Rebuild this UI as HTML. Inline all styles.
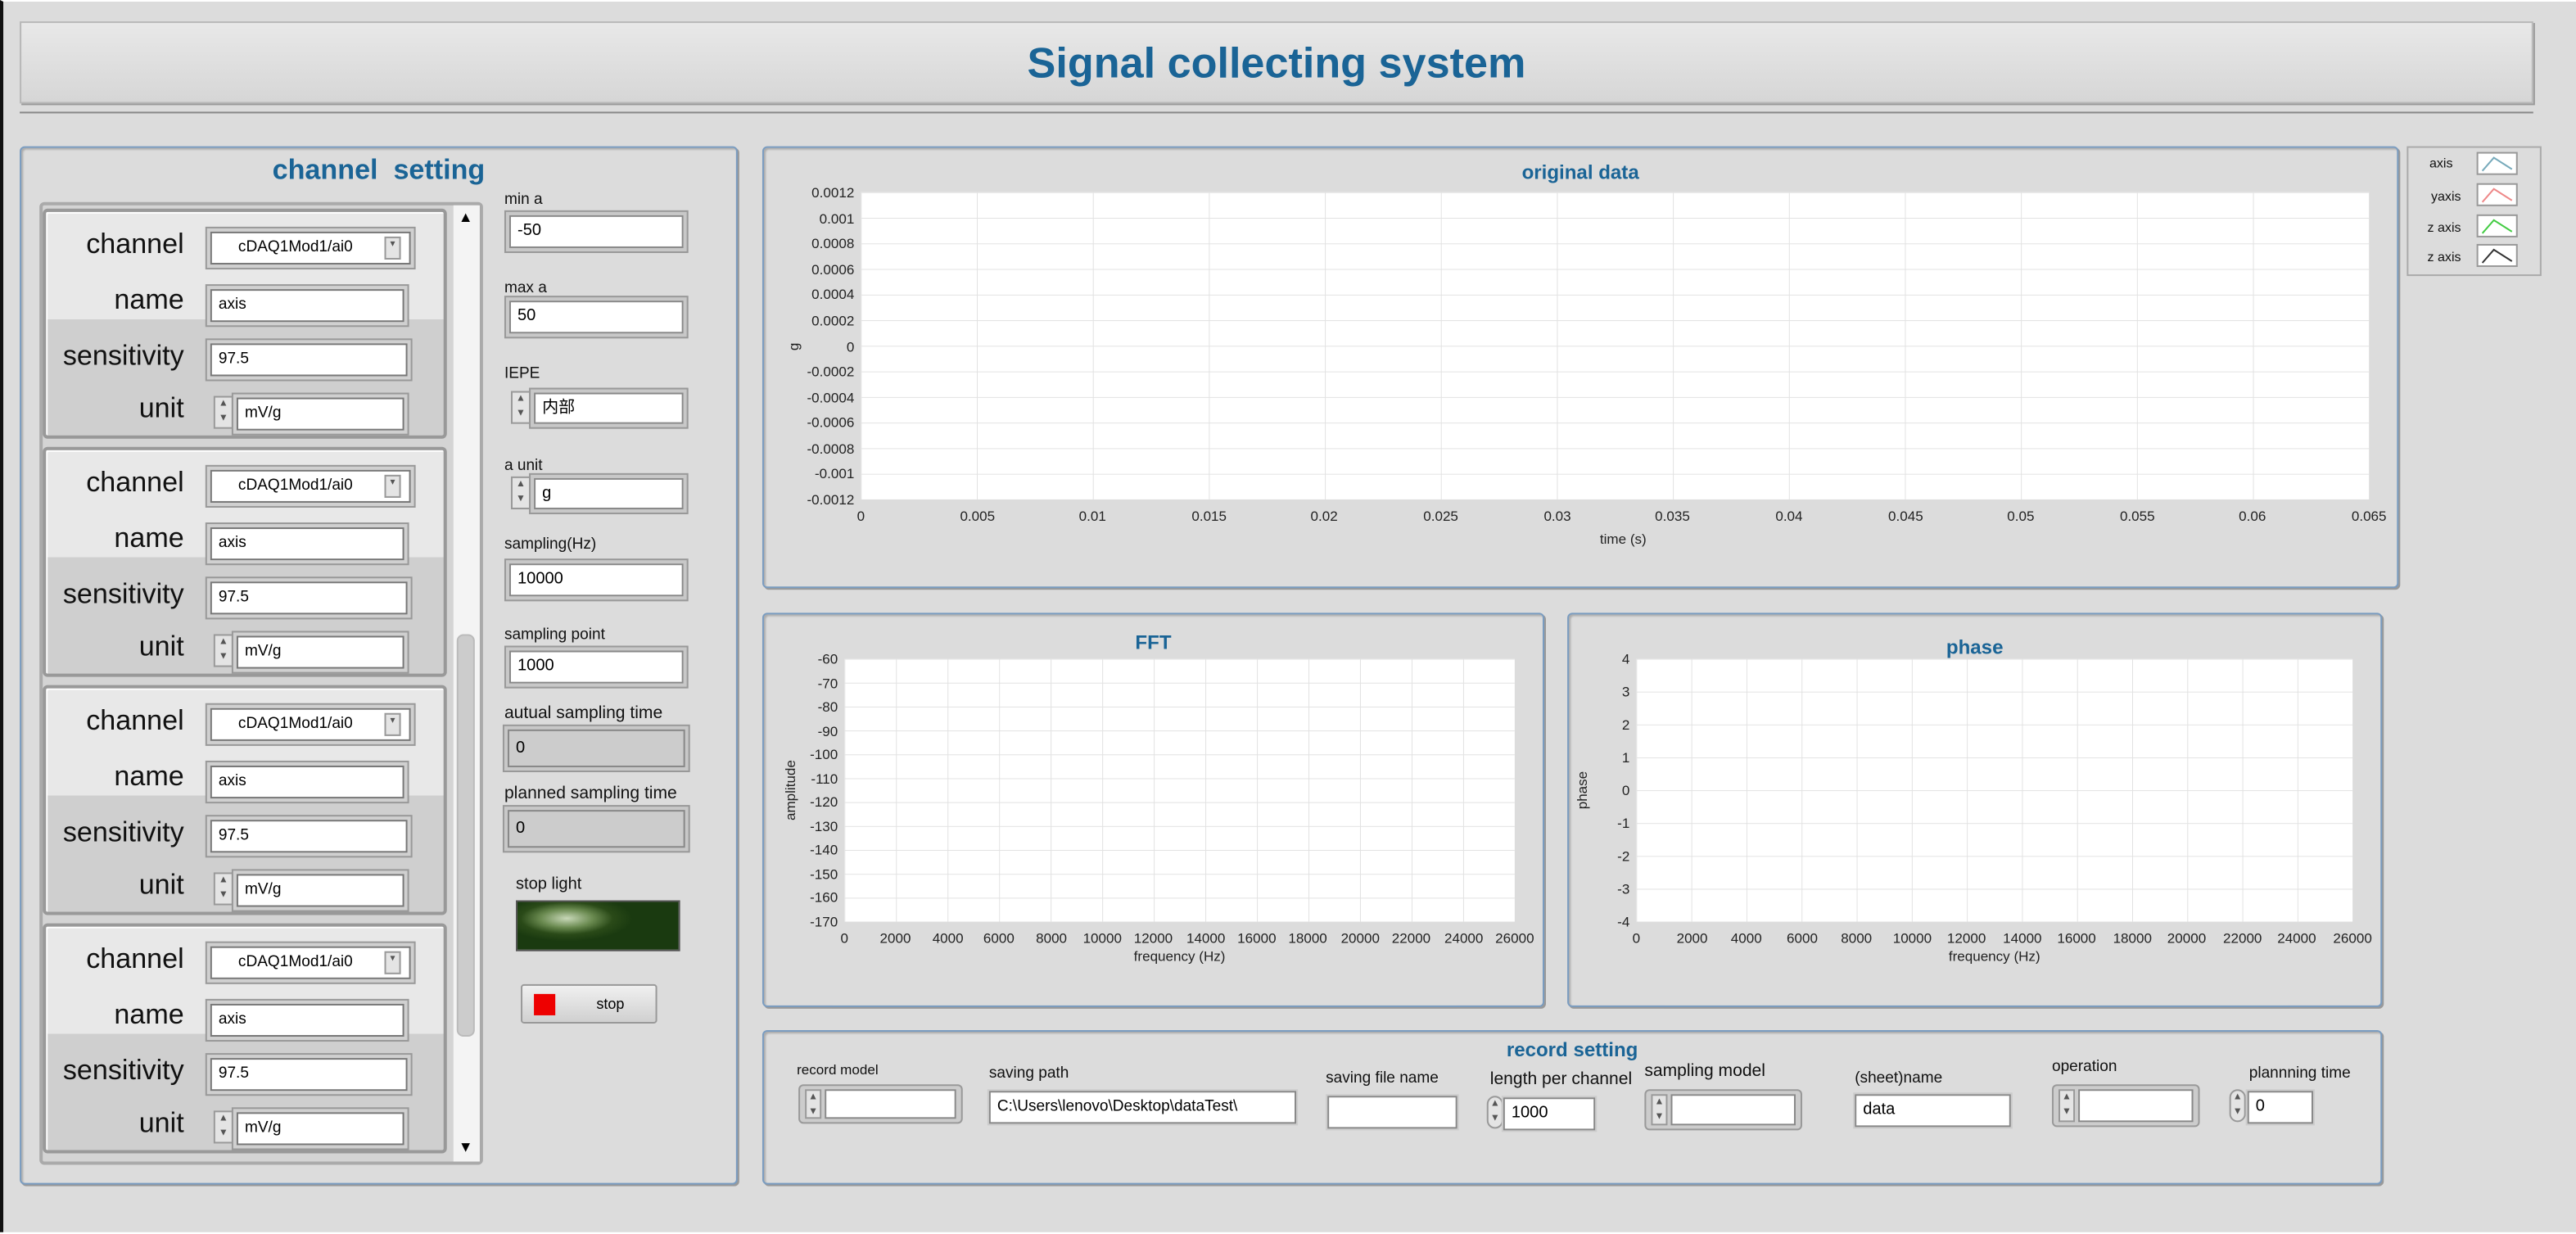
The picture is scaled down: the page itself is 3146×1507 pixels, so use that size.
<!DOCTYPE html>
<html><head><meta charset="utf-8"><style>
*{box-sizing:border-box;margin:0;padding:0}
html,body{width:3146px;height:1505px;overflow:hidden;background:#fff}
#s{position:absolute;left:0;top:0;width:1568px;height:750px;transform:scale(2.00638);transform-origin:0 0;font-family:"Liberation Sans","Noto Sans CJK SC",sans-serif;background:#dcdcdc;border-left:2px solid #111;border-top:1px solid #fff}
.a{position:absolute}
.hdr{left:10px;top:12px;width:1530px;height:50px;background:linear-gradient(#e8e8e8,#d6d6d6);border:1px solid #b8b8b8;box-shadow:1px 1px 0 #999;text-align:center;font-weight:bold;color:#1a6496;font-size:26px;line-height:48px}
.pan{border:1px solid #7a9cc0;border-radius:3px;box-shadow:1px 1px 1px #aaa inset,1px 1px 0 #999;background:#dcdcdc}
.pt{color:#1a6496;font-weight:bold;text-align:center;position:absolute;width:100%}
.box{position:absolute;background:#fff;border:1px solid #888;box-shadow:0 0 0 2px #c8c8c8,0 0 0 3px #999;font-size:10px;line-height:18px;padding-left:4px;color:#000}
.lb{position:absolute;font-size:9.5px;color:#111}
.cl{position:absolute;left:24px;width:246px;height:140px;border:2px solid #999;border-radius:3px;background:linear-gradient(#e8e8e8 0,#e8e8e8 48%,#cfcfcf 48%);box-shadow:inset 1px 1px 0 #fff}
.cl .l{position:absolute;right:158px;font-size:17px;color:#111;text-align:right}
.cl .b{position:absolute;left:100px;height:20px;background:#fff;border:1px solid #777;box-shadow:0 0 0 2px #d0d0d0,0 0 0 3px #999;font-size:9.5px;line-height:18px;padding-left:4px}
.sp{position:absolute;width:12px;height:20px;border:1px solid #999;background:#e4e4e4;font-size:6px;line-height:9px;text-align:center;color:#555}
svg text{font-family:"Liberation Sans",sans-serif}
</style></head><body><div id="s">
<div class="a hdr">Signal collecting system</div>
<div class="a" style="left:10px;top:67px;width:1530px;height:1px;background:#888"></div>

<!-- channel setting -->
<div class="a pan" style="left:10px;top:88px;width:437px;height:632px">
<div class="pt" style="top:4px;font-size:17px">channel&nbsp; setting</div>
</div>
<div class="a" style="left:22px;top:122px;width:270px;height:586px;border:2px solid #aaa;border-radius:3px;background:#d4d4d4"></div>
<div class="a" style="left:274px;top:124px;width:16px;height:582px;background:#f4f4f4"></div>
<div class="a" style="left:276px;top:385px;width:11px;height:245px;background:#ccc;border-radius:4px;border:1px solid #bbb"></div>
<div class="a" style="left:277px;top:126px;font-size:9px">▲</div>
<div class="a" style="left:277px;top:692px;font-size:9px">▼</div>

<div class="cl" style="top:126px">
<div class="l" style="top:10px">channel</div><div class="b" style="top:12px;width:122px;padding-left:16px">cDAQ1Mod1/ai0</div><div class="sp" style="left:206px;top:15px;height:14px;width:10px">▾</div>
<div class="l" style="top:44px">name</div><div class="b" style="top:47px;width:118px">axis</div>
<div class="l" style="top:78px">sensitivity</div><div class="b" style="top:80px;width:120px">97.5</div>
<div class="l" style="top:110px">unit</div><div class="sp" style="left:102px;top:112px">▲<br>▼</div><div class="b" style="left:116px;top:113px;width:102px">mV/g</div>
</div>
<div class="cl" style="top:271px">
<div class="l" style="top:10px">channel</div><div class="b" style="top:12px;width:122px;padding-left:16px">cDAQ1Mod1/ai0</div><div class="sp" style="left:206px;top:15px;height:14px;width:10px">▾</div>
<div class="l" style="top:44px">name</div><div class="b" style="top:47px;width:118px">axis</div>
<div class="l" style="top:78px">sensitivity</div><div class="b" style="top:80px;width:120px">97.5</div>
<div class="l" style="top:110px">unit</div><div class="sp" style="left:102px;top:112px">▲<br>▼</div><div class="b" style="left:116px;top:113px;width:102px">mV/g</div>
</div>
<div class="cl" style="top:416px">
<div class="l" style="top:10px">channel</div><div class="b" style="top:12px;width:122px;padding-left:16px">cDAQ1Mod1/ai0</div><div class="sp" style="left:206px;top:15px;height:14px;width:10px">▾</div>
<div class="l" style="top:44px">name</div><div class="b" style="top:47px;width:118px">axis</div>
<div class="l" style="top:78px">sensitivity</div><div class="b" style="top:80px;width:120px">97.5</div>
<div class="l" style="top:110px">unit</div><div class="sp" style="left:102px;top:112px">▲<br>▼</div><div class="b" style="left:116px;top:113px;width:102px">mV/g</div>
</div>
<div class="cl" style="top:561px">
<div class="l" style="top:10px">channel</div><div class="b" style="top:12px;width:122px;padding-left:16px">cDAQ1Mod1/ai0</div><div class="sp" style="left:206px;top:15px;height:14px;width:10px">▾</div>
<div class="l" style="top:44px">name</div><div class="b" style="top:47px;width:118px">axis</div>
<div class="l" style="top:78px">sensitivity</div><div class="b" style="top:80px;width:120px">97.5</div>
<div class="l" style="top:110px">unit</div><div class="sp" style="left:102px;top:112px">▲<br>▼</div><div class="b" style="left:116px;top:113px;width:102px">mV/g</div>
</div>

<!-- right column -->
<div class="lb" style="left:305px;top:115px">min a</div><div class="box" style="left:308px;top:130px;width:106px;height:20px">-50</div>
<div class="lb" style="left:305px;top:169px">max a</div><div class="box" style="left:308px;top:182px;width:106px;height:20px">50</div>
<div class="lb" style="left:305px;top:221px">IEPE</div><div class="sp" style="left:309px;top:237px">▲<br>▼</div><div class="box" style="left:323px;top:238px;width:91px;height:19px">内部</div>
<div class="lb" style="left:305px;top:277px">a unit</div><div class="sp" style="left:309px;top:289px">▲<br>▼</div><div class="box" style="left:323px;top:290px;width:91px;height:19px">g</div>
<div class="lb" style="left:305px;top:325px">sampling(Hz)</div><div class="box" style="left:308px;top:342px;width:106px;height:20px">10000</div>
<div class="lb" style="left:305px;top:380px">sampling point</div><div class="box" style="left:308px;top:395px;width:106px;height:20px">1000</div>
<div class="lb" style="left:305px;top:427px;font-size:10.5px">autual sampling time</div><div class="box" style="left:307px;top:443px;width:108px;height:23px;background:#ccc;line-height:22px">0</div>
<div class="lb" style="left:305px;top:476px;font-size:10.5px">planned sampling time</div><div class="box" style="left:307px;top:492px;width:108px;height:23px;background:#ccc;line-height:22px">0</div>
<div class="lb" style="left:312px;top:532px;font-size:10px">stop light</div>
<div class="a" style="left:312px;top:547px;width:100px;height:31px;border:1px solid #555;background:radial-gradient(ellipse 40px 14px at 30px 10px,#c8d8b8,#6a8a50 40%,#2a4a18 70%,#1a3a10)"></div>
<div class="a" style="left:315px;top:598px;width:83px;height:24px;border:1px solid #999;border-radius:2px;background:linear-gradient(#f0f0f0,#d0d0d0);font-size:9px;line-height:22px;padding-left:45px">stop</div>
<div class="a" style="left:323px;top:604px;width:13px;height:13px;background:#e00"></div>

<!-- plot panels -->
<div class="a pan" style="left:462px;top:88px;width:996px;height:269px"><div class="pt" style="top:8px;font-size:12px">original data</div></div>
<div class="a pan" style="left:462px;top:372px;width:476px;height:240px"><div class="pt" style="top:10px;font-size:12px">FFT</div></div>
<div class="a pan" style="left:952px;top:372px;width:496px;height:240px"><div class="pt" style="top:13px;font-size:12px">phase</div></div>
<div class="a pan" style="left:462px;top:626px;width:986px;height:94px"><div class="pt" style="top:4px;font-size:12px">record setting</div></div>

<div class="a" style="left:1463px;top:88px;width:82px;height:79px;border:1px solid #aaa;background:#dcdcdc"></div>

<svg class="a" style="left:0;top:0" width="1568" height="750" viewBox="0 0 1568 750">
<defs>
<pattern id="g1" x="522" y="116" width="70.615" height="15.583" patternUnits="userSpaceOnUse"><path d="M0 0V16M0 0H71" stroke="#e2e2e2" fill="none"/></pattern>
<pattern id="g2" x="512" y="400" width="31.385" height="14.545" patternUnits="userSpaceOnUse"><path d="M0 0V15M0 0H32" stroke="#e2e2e2" fill="none"/></pattern>
<pattern id="g3" x="994" y="400" width="33.54" height="20" patternUnits="userSpaceOnUse"><path d="M0 0V20M0 0H34" stroke="#e2e2e2" fill="none"/></pattern>
</defs>
<rect x="522" y="116" width="918" height="187" fill="#fff"/><rect x="522" y="116" width="918" height="187" fill="url(#g1)"/>
<rect x="512" y="400" width="408" height="160" fill="#fff"/><rect x="512" y="400" width="408" height="160" fill="url(#g2)"/>
<rect x="994" y="400" width="436" height="160" fill="#fff"/><rect x="994" y="400" width="436" height="160" fill="url(#g3)"/>
<g font-size="8.5" fill="#222" text-anchor="end">
<text x="518" y="119">0.0012</text><text x="518" y="135">0.001</text><text x="518" y="150">0.0008</text><text x="518" y="166">0.0006</text><text x="518" y="181">0.0004</text><text x="518" y="197">0.0002</text><text x="518" y="213">0</text><text x="518" y="228">-0.0002</text><text x="518" y="244">-0.0004</text><text x="518" y="259">-0.0006</text><text x="518" y="275">-0.0008</text><text x="518" y="290">-0.001</text><text x="518" y="306">-0.0012</text>
<text x="508" y="403">-60</text><text x="508" y="418">-70</text><text x="508" y="432">-80</text><text x="508" y="447">-90</text><text x="508" y="461">-100</text><text x="508" y="476">-110</text><text x="508" y="490">-120</text><text x="508" y="505">-130</text><text x="508" y="519">-140</text><text x="508" y="534">-150</text><text x="508" y="548">-160</text><text x="508" y="563">-170</text>
<text x="990" y="403">4</text><text x="990" y="423">3</text><text x="990" y="443">2</text><text x="990" y="463">1</text><text x="990" y="483">0</text><text x="990" y="503">-1</text><text x="990" y="523">-2</text><text x="990" y="543">-3</text><text x="990" y="563">-4</text>
</g>
<g font-size="8.5" fill="#222" text-anchor="middle">
<text x="522" y="316">0</text><text x="593" y="316">0.005</text><text x="663" y="316">0.01</text><text x="734" y="316">0.015</text><text x="804" y="316">0.02</text><text x="875" y="316">0.025</text><text x="946" y="316">0.03</text><text x="1016" y="316">0.035</text><text x="1087" y="316">0.04</text><text x="1158" y="316">0.045</text><text x="1228" y="316">0.05</text><text x="1299" y="316">0.055</text><text x="1369" y="316">0.06</text><text x="1440" y="316">0.065</text>
<text x="986" y="330">time (s)</text>
<text x="512" y="573">0</text><text x="543" y="573">2000</text><text x="575" y="573">4000</text><text x="606" y="573">6000</text><text x="638" y="573">8000</text><text x="669" y="573">10000</text><text x="700" y="573">12000</text><text x="732" y="573">14000</text><text x="763" y="573">16000</text><text x="794" y="573">18000</text><text x="826" y="573">20000</text><text x="857" y="573">22000</text><text x="889" y="573">24000</text><text x="920" y="573">26000</text>
<text x="716" y="584">frequency (Hz)</text>
<text x="994" y="573">0</text><text x="1028" y="573">2000</text><text x="1061" y="573">4000</text><text x="1095" y="573">6000</text><text x="1128" y="573">8000</text><text x="1162" y="573">10000</text><text x="1195" y="573">12000</text><text x="1229" y="573">14000</text><text x="1262" y="573">16000</text><text x="1296" y="573">18000</text><text x="1329" y="573">20000</text><text x="1363" y="573">22000</text><text x="1396" y="573">24000</text><text x="1430" y="573">26000</text>
<text x="1212" y="584">frequency (Hz)</text>
<text transform="translate(484,210) rotate(-90)">g</text>
<text transform="translate(482,480) rotate(-90)">amplitude</text>
<text transform="translate(964,480) rotate(-90)">phase</text>
</g>
<g font-size="8" fill="#111" text-anchor="end">
<text x="1491" y="101">axis</text><text x="1496" y="121">yaxis</text><text x="1496" y="140">z axis</text><text x="1496" y="158">z axis</text>
</g>
<g fill="#fff" stroke="#999">
<rect x="1506" y="92" width="24" height="13"/><rect x="1506" y="111" width="24" height="13"/><rect x="1506" y="130" width="24" height="13"/><rect x="1506" y="148" width="24" height="13"/>
</g>
<g fill="none" stroke-width="1">
<path d="M1509 103L1516 95L1527 102" stroke="#7ab"/><path d="M1509 122L1516 114L1527 121" stroke="#e88"/><path d="M1509 141L1516 133L1527 140" stroke="#4c4"/><path d="M1509 159L1516 151L1527 158" stroke="#333"/>
</g>
</svg>

<!-- record setting -->
<div class="lb" style="left:483px;top:645px;font-size:8.5px">record model</div>
<div class="a" style="left:484px;top:659px;width:100px;height:24px;border:1px solid #999;border-radius:3px;background:#ccc"></div><div class="sp" style="left:488px;top:662px;height:18px;width:10px">▲<br>▼</div><div class="box" style="left:500px;top:662px;width:80px;height:18px;box-shadow:none"></div>
<div class="lb" style="left:600px;top:647px">saving path</div><div class="box" style="left:600px;top:663px;width:187px;height:20px;font-size:9.5px;box-shadow:0 0 0 1px #ccc">C:\Users\lenovo\Desktop\dataTest\</div>
<div class="lb" style="left:805px;top:650px">saving file name</div><div class="box" style="left:806px;top:666px;width:79px;height:20px;box-shadow:0 0 0 1px #ccc"></div>
<div class="lb" style="left:905px;top:650px;font-size:10.5px">length per channel</div><div class="sp" style="left:903px;top:666px;width:10px;border-radius:5px">▲<br>▼</div><div class="box" style="left:913px;top:667px;width:56px;height:20px;box-shadow:0 0 0 1px #ccc">1000</div>
<div class="lb" style="left:999px;top:645px;font-size:10.5px">sampling model</div>
<div class="a" style="left:999px;top:662px;width:96px;height:25px;border:1px solid #999;border-radius:3px;background:#ccc"></div><div class="sp" style="left:1003px;top:665px;height:19px;width:10px">▲<br>▼</div><div class="box" style="left:1015px;top:665px;width:76px;height:19px;box-shadow:none"></div>
<div class="lb" style="left:1127px;top:650px">(sheet)name</div><div class="box" style="left:1127px;top:665px;width:95px;height:20px;box-shadow:0 0 0 1px #ccc">data</div>
<div class="lb" style="left:1247px;top:643px">operation</div>
<div class="a" style="left:1247px;top:659px;width:90px;height:26px;border:1px solid #999;border-radius:3px;background:#ccc"></div><div class="sp" style="left:1251px;top:662px;height:20px;width:10px">▲<br>▼</div><div class="box" style="left:1263px;top:662px;width:70px;height:20px;box-shadow:none"></div>
<div class="lb" style="left:1367px;top:647px">plannning time</div><div class="sp" style="left:1355px;top:662px;width:10px;border-radius:5px">▲<br>▼</div><div class="box" style="left:1366px;top:663px;width:40px;height:20px;box-shadow:0 0 0 1px #ccc">0</div>
</div></body></html>
